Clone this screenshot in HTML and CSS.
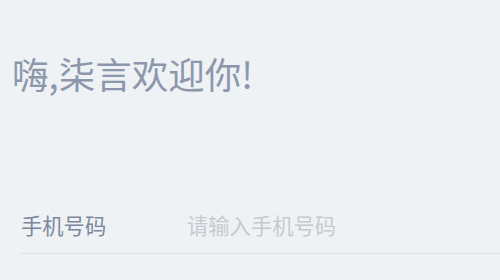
FILE: index.html
```html
<!DOCTYPE html>
<html lang="zh-CN">
  <head>
    <meta charset="UTF-8" />
    <meta name="viewport" content="width=device-width, initial-scale=1.0" />
    <title>登录</title>
    <link rel="stylesheet" href="styles.css">
  </head>
  <body>
    <div class="page">
      <h1 class="welcome">嗨,柒言欢迎你!</h1>
      <form class="login-form">
        <label class="field">
          <span class="field-label">手机号码</span>
          <input class="field-input" type="tel" placeholder="请输入手机号码" />
        </label>
      </form>
    </div>
  </body>
</html>
```

FILE: styles.css
```css
* {
  box-sizing: border-box;
  font-family: 'Noto Sans CJK SC', 'Noto Sans', sans-serif;
}

body {
  margin: 0;
  background: #eef2f5;
}

.page {
  padding: 48px 0 0 12px;
}

.welcome {
  margin: 0;
  font-size: 36.5px;
  font-weight: 400;
  line-height: 52px;
  color: #8d97ac;
}

.login-form {
  margin-top: 97px;
  padding-left: 8px;
}

.field {
  display: flex;
  align-items: center;
  height: 57px;
  padding-bottom: 2px;
  border-bottom: 1px solid #dce2e8;
}

.field-label {
  width: 167px;
  padding-left: 1px;
  font-size: 21.3px;
  color: #7d879c;
}

.field-input {
  flex: 1;
  border: none;
  outline: none;
  background: transparent;
  padding: 0;
  font-size: 21.3px;
  color: #555;
}

.field-input::placeholder {
  color: #c6cacf;
}
```
